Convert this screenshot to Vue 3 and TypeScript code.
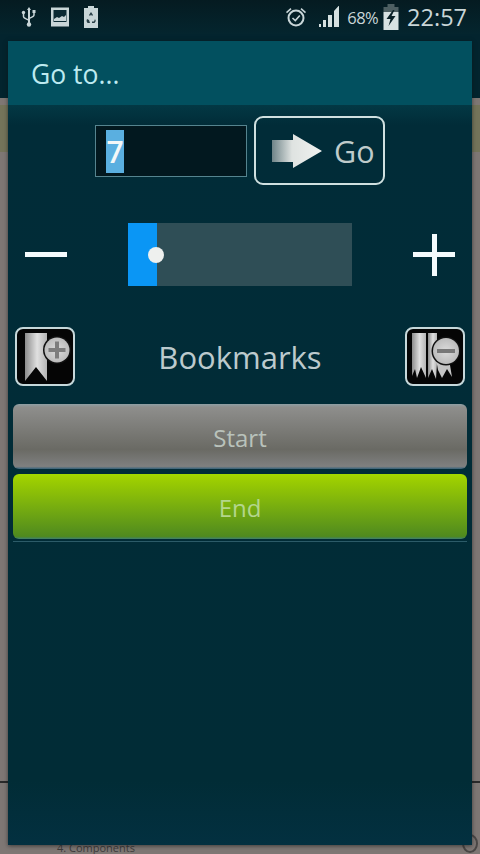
<script setup lang="ts">
const rows: { label: string; kind: string }[] = [
  { label: 'Start', kind: 'start' },
  { label: 'End', kind: 'end' },
]
</script>

<template>
  <div class="screen">
    <div class="backdrop">
      <div class="bd-top"></div>
      <div class="bd-strip"></div>
      <div class="bd-line"></div>
      <span class="bd-text">4. Components</span>
      <span class="bd-ring"></span>
    </div>

    <header class="status">
      <div class="status-left">
        <svg width="16" height="22" viewBox="0 0 16 22" class="ic usb">
          <path d="M8 1l2 3H9v11.500c0 .5 0 .8-.1 1.500H7.100C7 16.300 7 16 7 15.500V4H6z" fill="#c9d6d8" />
          <path d="M2.500 7v3.500C2.500 12 4 12.500 7.500 14M13 6v3c0 1.500-1.500 2-5 3.500" fill="none" stroke="#c9d6d8" stroke-width="1.500" />
          <circle cx="2.500" cy="6.500" r="1.700" fill="#c9d6d8" />
          <rect x="11.500" y="4" width="3" height="3" fill="#c9d6d8" />
          <circle cx="8" cy="18.500" r="2.200" fill="#c9d6d8" />
        </svg>
        <svg width="20" height="22" viewBox="0 0 20 22" class="ic">
          <rect x="1" y="1.500" width="18" height="19" fill="#c9d6d8" />
          <rect x="3.500" y="4" width="13" height="12" fill="#0b2a33" />
          <path d="M4 15v-2l3-2 2 1 3-2 2 1 2-2v6z" fill="#c9d6d8" />
        </svg>
        <svg width="16" height="24" viewBox="0 0 16 24" class="ic">
          <path d="M5 1h6v2h4v20H1V3h4z" fill="#c9d6d8" />
          <path d="M6 10l2-3 2 3-1 1-1-1.500L7 11zM4 14l2 1 1 3H4.500L3.500 16zM12 14l.8 2-1.300 2H9v-1.500h2z" fill="#263c44" />
        </svg>
      </div>
      <div class="status-right">
        <svg width="22" height="22" viewBox="0 0 22 22" class="alarm">
          <circle cx="11" cy="12" r="7.500" fill="none" stroke="#c9d6d8" stroke-width="2" />
          <path d="M7.500 12l2.800 2.500 4.500-5" fill="none" stroke="#c9d6d8" stroke-width="1.600" />
          <path d="M1 6l4.500-4 1 1.200-4.500 4zM21 6l-4.500-4-1 1.200 4.500 4z" fill="#c9d6d8" />
        </svg>
        <svg width="22" height="24" viewBox="0 0 22 24" class="signal">
          <path d="M1 22h2v-3H1zM5 22h3v-7H5zM10 22h4V10h-4zM16 22h5V1h-.5L16 6z" fill="#d5e0e0" />
        </svg>
        <span class="pct">68%</span>
        <svg width="16" height="26" viewBox="0 0 16 26" class="batt">
          <rect x="4.500" y="0" width="7" height="3" fill="#4d5f62" />
          <rect x="0.500" y="3" width="15" height="5" fill="#4d5f62" />
          <rect x="0.500" y="8" width="15" height="18" fill="#d8e2e2" />
          <path d="M10 6L3.500 15h4l-2 7 7-10h-4l3-6z" fill="#0b2228" />
        </svg>
        <span class="clock">22:57</span>
      </div>
    </header>

    <main class="dialog">
      <h1 class="title">Go to...</h1>

      <section class="go-row">
        <div class="field"><span class="selected">7</span></div>
        <button class="go-btn">
          <svg width="52" height="36" viewBox="0 0 52 36">
            <defs>
              <linearGradient id="arrowFade" x1="0" x2="1" y1="0" y2="0">
                <stop offset="0" stop-color="#6f8488" />
                <stop offset="0.4" stop-color="#dfe3e1" />
                <stop offset="1" stop-color="#f0f2f0" />
              </linearGradient>
            </defs>
            <path d="M1 7h21V1l29 17-29 17v-6H1z" fill="url(#arrowFade)" />
          </svg>
          <span>Go</span>
        </button>
      </section>

      <section class="slider-row">
        <span class="minus"></span>
        <div class="track">
          <div class="fill"></div>
          <span class="thumb"></span>
        </div>
        <span class="plus"></span>
      </section>

      <section class="bookmarks-row">
        <button class="mark-btn">
          <svg width="56" height="55" viewBox="0 0 56 55">
            <defs>
              <linearGradient id="ribbon" x1="0" x2="1" y1="0" y2="0">
                <stop offset="0" stop-color="#8c8c8c" />
                <stop offset="0.55" stop-color="#e0e0e0" />
                <stop offset="1" stop-color="#b4b4b4" />
              </linearGradient>
              <radialGradient id="disc">
                <stop offset="0" stop-color="#dcdcdc" />
                <stop offset="1" stop-color="#bcbcbc" />
              </radialGradient>
            </defs>
            <path d="M8 4h22v48L19 38 8 52z" fill="url(#ribbon)" />
            <circle cx="40" cy="21" r="14" fill="#101010" />
            <circle cx="40" cy="21" r="12.500" fill="url(#disc)" />
            <path d="M38 12.500h4v6.500h6.500v4H42v6.500h-4V23h-6.500v-4H38z" fill="#7d7d7d" />
          </svg>
        </button>
        <span class="bookmarks">Bookmarks</span>
        <button class="mark-btn">
          <svg width="56" height="55" viewBox="0 0 56 55">
            <path d="M5 4h14v45l-5-11-4 11-2-9-3 7z" fill="url(#ribbon)" />
            <path d="M21 4h9v30l-1 16-4-10-4 9z" fill="url(#ribbon)" />
            <path d="M29 30h13l3 18-5-8-5 9-4-8z" fill="#c4c4c4" />
            <circle cx="39" cy="22" r="14.500" fill="#101010" />
            <circle cx="39" cy="22" r="13" fill="url(#disc)" />
            <rect x="30" y="20" width="18" height="4" fill="#787878" />
          </svg>
        </button>
      </section>

      <section class="list">
        <button v-for="row in rows" :key="row.kind" class="row" :class="row.kind">{{ row.label }}</button>
      </section>
    </main>
  </div>
</template>

<style scoped>
.screen {
  position: relative;
  width: 480px;
  height: 854px;
  overflow: hidden;
  font-family: "Open Sans", "Liberation Sans", sans-serif;
  background: #7e7774;
}
.backdrop {
  position: absolute;
  inset: 0;
}
.bd-top {
  position: absolute;
  left: 0;
  top: 0;
  width: 480px;
  height: 98px;
  background: #03242e;
}
.bd-strip {
  position: absolute;
  left: 0;
  top: 105px;
  width: 480px;
  height: 47px;
  background: #74745a;
}
.bd-line {
  position: absolute;
  left: 0;
  top: 781px;
  width: 480px;
  height: 2px;
  background: #2a2a2a;
}
.bd-text {
  position: absolute;
  left: 57px;
  top: 842px;
  font-size: 11px;
  line-height: 12px;
  color: #3e3c3c;
}
.bd-ring {
  position: absolute;
  left: 462px;
  top: 834px;
  width: 12px;
  height: 15px;
  border: 2px solid #4a4746;
  border-radius: 50%;
}
.status {
  position: relative;
  height: 34px;
  display: flex;
  justify-content: space-between;
  align-items: center;
  padding: 0 13px 0 21px;
  background: linear-gradient(#051b21, #04252e);
  box-sizing: border-box;
}
.status-left {
  display: flex;
  align-items: center;
  gap: 13px;
}
.status-right {
  display: flex;
  align-items: center;
}
.ic {
  display: block;
}
.alarm {
  margin-right: 11px;
}
.signal {
  margin-right: 7px;
}
.pct {
  font-size: 16.500px;
  letter-spacing: -0.6px;
  color: #c9d6d8;
  margin-right: 5px;
}
.batt {
  margin-right: 8px;
}
.clock {
  font-size: 23.500px;
  color: #c9d6d8;
}
.dialog {
  position: relative;
  margin: 7px 8px 0;
  height: 804px;
  box-sizing: border-box;
  background: linear-gradient(#033844 64px, #012c38 84px, #012c36 92%, #033040 100%);
  box-shadow: 0 1px 4px rgba(20, 20, 20, 0.6);
}
.title {
  margin: 0;
  height: 64px;
  box-sizing: border-box;
  padding-left: 23px;
  line-height: 66px;
  font-size: 26.500px;
  font-weight: 400;
  color: #bdeaf0;
  background: #02505f;
}
.go-row {
  display: flex;
  align-items: center;
  height: 69px;
  margin-top: 11px;
  padding-left: 87px;
  gap: 7px;
}
.field {
  width: 152px;
  height: 52px;
  box-sizing: border-box;
  border: 1px solid #55848f;
  background: #02181f;
  padding: 4px 0 0 10px;
}
.selected {
  display: block;
  width: 18px;
  height: 43px;
  line-height: 44px;
  text-align: center;
  font-size: 30px;
  font-weight: 600;
  color: #f4f8f8;
  background: #5aafe0;
}
.go-btn {
  width: 131px;
  height: 69px;
  box-sizing: border-box;
  padding: 0 0 0 15px;
  display: flex;
  align-items: center;
  gap: 11px;
  border: 2px solid #cfe0e0;
  border-radius: 9px;
  background: transparent;
  font-family: inherit;
  font-size: 30.500px;
  color: #bfcbcb;
}
.slider-row {
  display: flex;
  align-items: center;
  margin-top: 38px;
  padding-left: 17px;
  height: 63px;
}
.minus {
  display: block;
  width: 42px;
  height: 5px;
  background: #f4fbfd;
}
.track {
  position: relative;
  margin-left: 61px;
  width: 224px;
  height: 63px;
  background: #2f4e56;
}
.fill {
  width: 29px;
  height: 100%;
  background: #0a96f5;
}
.thumb {
  position: absolute;
  left: 20px;
  top: 24px;
  width: 16px;
  height: 16px;
  border-radius: 50%;
  background: #eef0ee;
}
.plus {
  position: relative;
  display: block;
  width: 42px;
  height: 42px;
  margin-left: 61px;
  background:
    linear-gradient(#f4fbfd, #f4fbfd) center / 42px 5px no-repeat,
    linear-gradient(#f4fbfd, #f4fbfd) center / 5px 42px no-repeat;
}
.bookmarks-row {
  display: flex;
  align-items: center;
  justify-content: space-between;
  margin-top: 41px;
  padding: 0 7px;
  height: 59px;
}
.mark-btn {
  width: 60px;
  height: 59px;
  box-sizing: border-box;
  padding: 0;
  display: flex;
  align-items: center;
  justify-content: center;
  border: 2px solid #c6d8da;
  border-radius: 8px;
  background: #050505;
}
.bookmarks {
  font-size: 31px;
  color: #bccacd;
}
.list {
  display: flex;
  flex-direction: column;
  gap: 5px;
  margin-top: 18px;
  padding: 0 5px;
}
.row {
  height: 65px;
  padding: 2px 0 0;
  border: none;
  border-radius: 6px;
  font-family: inherit;
  font-size: 24px;
}
.start {
  background: linear-gradient(#8f9fa4 0, #8e8e8c 5%, #6a6a64 70%, #7f8080 96%, #35627a 100%);
  color: #b9c2bb;
}
.end {
  background: linear-gradient(#a3d900 0, #9fd000 6%, #4f8a1f 96%, #3f7f70 100%);
  color: #b4d68c;
}
.list::after {
  content: "";
  height: 1px;
  margin-top: -3px;
  background: #2c5b68;
}
</style>
